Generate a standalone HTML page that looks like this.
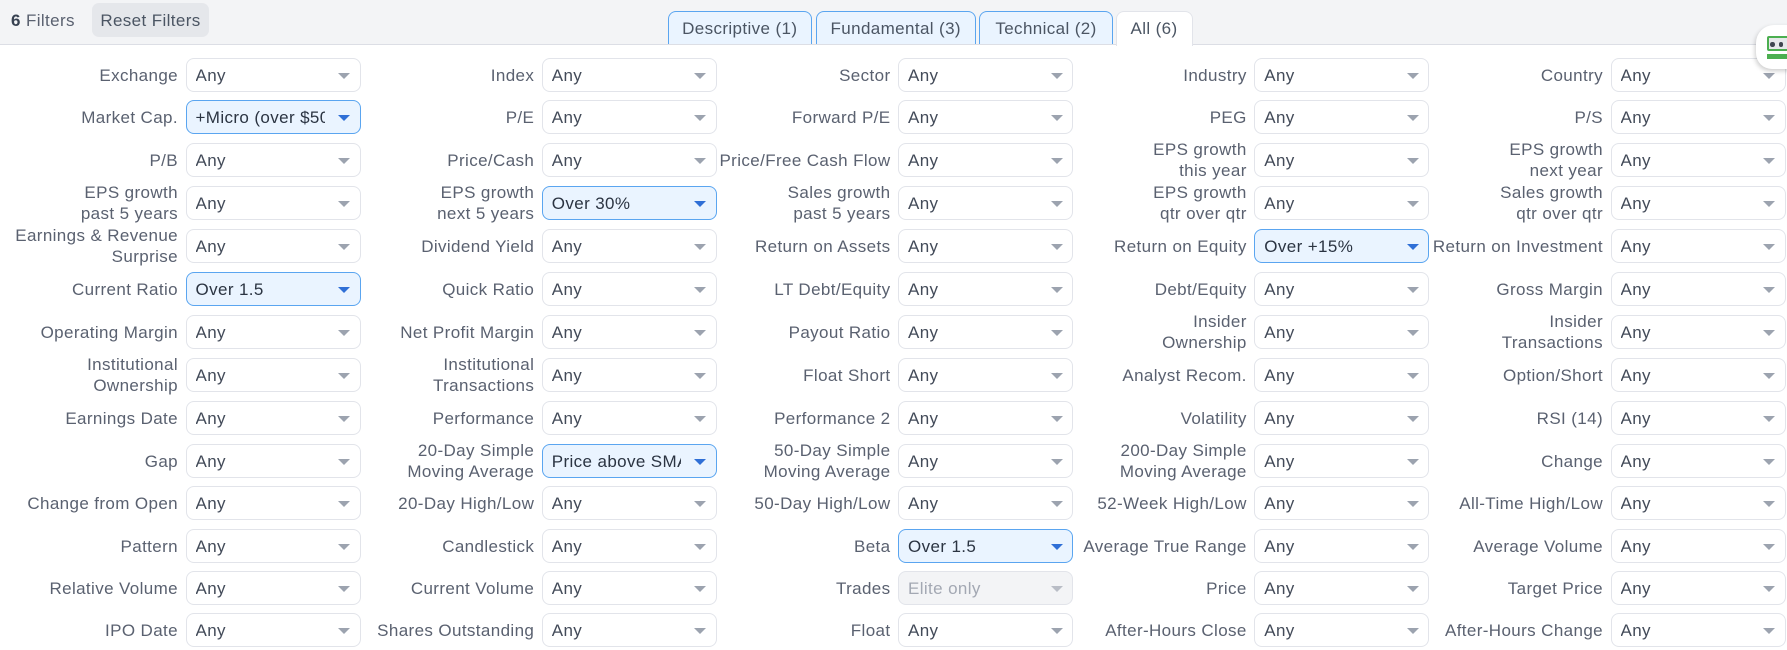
<!DOCTYPE html>
<html lang="en"><head><meta charset="utf-8"><title>Filters</title>
<style>
html,body{margin:0;padding:0;width:1787px;height:650px;overflow:hidden;background:#fff}
body{position:relative;font-family:"Liberation Sans",sans-serif;font-size:17px;letter-spacing:.38px;color:#5a6170}
.top{position:absolute;left:0;top:0;width:1787px;height:44px;background:#f3f4f6;border-bottom:1.5px solid #dcdee5}
.n{position:absolute;left:11px;top:10.5px;line-height:20px;color:#5a6170}
.n b{color:#374151}
.r{position:absolute;left:92px;top:3px;width:117px;height:34px;line-height:35px;border-radius:7px;background:#e5e7eb;text-align:center;color:#4b5563}
.t{position:absolute;top:11px;height:33px;line-height:34px;box-sizing:border-box;border:1.3px solid #5aa5f0;border-bottom:0;border-radius:8px 8px 0 0;background:#eaf4ff;text-align:center;color:#4b5563}
.t.a{background:#fff;border-color:#e2e4ea;height:35px;z-index:2}
.g{position:absolute;left:4.25px;top:58px;display:grid;grid-template-columns:repeat(5,356.25px);grid-template-rows:42px 43px 43px 43px 43px 43px 43px 43px 43px 42px 43px 42px 42px 36px}
.c{display:flex;justify-content:flex-end;align-items:flex-start;height:33.7px}
.l{white-space:nowrap;text-align:right;line-height:20.5px;margin-right:7.5px;align-self:center;position:relative;top:1px;color:#5a6170}
.v{position:relative;flex:none;width:175px;height:33.7px;box-sizing:border-box;border:1.2px solid #e2e4ea;border-radius:8px;background:#fff;color:#434b59}
.v span{position:absolute;left:9px;top:0;width:129.5px;overflow:hidden;white-space:nowrap;line-height:33px}
.v:after{content:"";position:absolute;right:9.3px;top:13.5px;border-left:6px solid transparent;border-right:6px solid transparent;border-top:6.5px solid #9ca3af}
.on{background:#eaf4ff;border-color:#5aa5f0;color:#2b3442}
.on:after{border-top-color:#2f6fd6}
.off{background:#f3f4f6;color:#a3a8b3}
.off:after{border-top-color:#b9bdc6}
.bot{position:absolute;left:1755.5px;top:25px;width:40px;height:44px;background:#fff;border-radius:18px 0 0 16px;box-shadow:-1px 2px 5px rgba(0,0,0,.2);z-index:5}
.bot i{position:absolute;display:block}
</style></head><body>
<div class="top"></div>
<div class="n"><b>6</b> Filters</div>
<div class="r">Reset Filters</div>
<div class="t" style="left:667.5px;width:144.5px">Descriptive (1)</div>
<div class="t" style="left:815.5px;width:160.5px">Fundamental (3)</div>
<div class="t" style="left:979px;width:134px">Technical (2)</div>
<div class="t a" style="left:1115.5px;width:77px">All (6)</div>
<div class="g">
<div class="c"><div class="l">Exchange</div><div class="v"><span>Any</span></div></div>
<div class="c"><div class="l">Index</div><div class="v"><span>Any</span></div></div>
<div class="c"><div class="l">Sector</div><div class="v"><span>Any</span></div></div>
<div class="c"><div class="l">Industry</div><div class="v"><span>Any</span></div></div>
<div class="c"><div class="l">Country</div><div class="v"><span>Any</span></div></div>

<div class="c"><div class="l">Market Cap.</div><div class="v on"><span>+Micro (over $50mln)</span></div></div>
<div class="c"><div class="l">P/E</div><div class="v"><span>Any</span></div></div>
<div class="c"><div class="l">Forward P/E</div><div class="v"><span>Any</span></div></div>
<div class="c"><div class="l">PEG</div><div class="v"><span>Any</span></div></div>
<div class="c"><div class="l">P/S</div><div class="v"><span>Any</span></div></div>

<div class="c"><div class="l">P/B</div><div class="v"><span>Any</span></div></div>
<div class="c"><div class="l">Price/Cash</div><div class="v"><span>Any</span></div></div>
<div class="c"><div class="l">Price/Free Cash Flow</div><div class="v"><span>Any</span></div></div>
<div class="c"><div class="l">EPS growth<br>this year</div><div class="v"><span>Any</span></div></div>
<div class="c"><div class="l">EPS growth<br>next year</div><div class="v"><span>Any</span></div></div>

<div class="c"><div class="l">EPS growth<br>past 5 years</div><div class="v"><span>Any</span></div></div>
<div class="c"><div class="l">EPS growth<br>next 5 years</div><div class="v on"><span>Over 30%</span></div></div>
<div class="c"><div class="l">Sales growth<br>past 5 years</div><div class="v"><span>Any</span></div></div>
<div class="c"><div class="l">EPS growth<br>qtr over qtr</div><div class="v"><span>Any</span></div></div>
<div class="c"><div class="l">Sales growth<br>qtr over qtr</div><div class="v"><span>Any</span></div></div>

<div class="c"><div class="l">Earnings &amp; Revenue<br>Surprise</div><div class="v"><span>Any</span></div></div>
<div class="c"><div class="l">Dividend Yield</div><div class="v"><span>Any</span></div></div>
<div class="c"><div class="l">Return on Assets</div><div class="v"><span>Any</span></div></div>
<div class="c"><div class="l">Return on Equity</div><div class="v on"><span>Over +15%</span></div></div>
<div class="c"><div class="l">Return on Investment</div><div class="v"><span>Any</span></div></div>

<div class="c"><div class="l">Current Ratio</div><div class="v on"><span>Over 1.5</span></div></div>
<div class="c"><div class="l">Quick Ratio</div><div class="v"><span>Any</span></div></div>
<div class="c"><div class="l">LT Debt/Equity</div><div class="v"><span>Any</span></div></div>
<div class="c"><div class="l">Debt/Equity</div><div class="v"><span>Any</span></div></div>
<div class="c"><div class="l">Gross Margin</div><div class="v"><span>Any</span></div></div>

<div class="c"><div class="l">Operating Margin</div><div class="v"><span>Any</span></div></div>
<div class="c"><div class="l">Net Profit Margin</div><div class="v"><span>Any</span></div></div>
<div class="c"><div class="l">Payout Ratio</div><div class="v"><span>Any</span></div></div>
<div class="c"><div class="l">Insider<br>Ownership</div><div class="v"><span>Any</span></div></div>
<div class="c"><div class="l">Insider<br>Transactions</div><div class="v"><span>Any</span></div></div>

<div class="c"><div class="l">Institutional<br>Ownership</div><div class="v"><span>Any</span></div></div>
<div class="c"><div class="l">Institutional<br>Transactions</div><div class="v"><span>Any</span></div></div>
<div class="c"><div class="l">Float Short</div><div class="v"><span>Any</span></div></div>
<div class="c"><div class="l">Analyst Recom.</div><div class="v"><span>Any</span></div></div>
<div class="c"><div class="l">Option/Short</div><div class="v"><span>Any</span></div></div>

<div class="c"><div class="l">Earnings Date</div><div class="v"><span>Any</span></div></div>
<div class="c"><div class="l">Performance</div><div class="v"><span>Any</span></div></div>
<div class="c"><div class="l">Performance 2</div><div class="v"><span>Any</span></div></div>
<div class="c"><div class="l">Volatility</div><div class="v"><span>Any</span></div></div>
<div class="c"><div class="l">RSI (14)</div><div class="v"><span>Any</span></div></div>

<div class="c"><div class="l">Gap</div><div class="v"><span>Any</span></div></div>
<div class="c"><div class="l">20-Day Simple<br>Moving Average</div><div class="v on"><span>Price above SMA20</span></div></div>
<div class="c"><div class="l">50-Day Simple<br>Moving Average</div><div class="v"><span>Any</span></div></div>
<div class="c"><div class="l">200-Day Simple<br>Moving Average</div><div class="v"><span>Any</span></div></div>
<div class="c"><div class="l">Change</div><div class="v"><span>Any</span></div></div>

<div class="c"><div class="l">Change from Open</div><div class="v"><span>Any</span></div></div>
<div class="c"><div class="l">20-Day High/Low</div><div class="v"><span>Any</span></div></div>
<div class="c"><div class="l">50-Day High/Low</div><div class="v"><span>Any</span></div></div>
<div class="c"><div class="l">52-Week High/Low</div><div class="v"><span>Any</span></div></div>
<div class="c"><div class="l">All-Time High/Low</div><div class="v"><span>Any</span></div></div>

<div class="c"><div class="l">Pattern</div><div class="v"><span>Any</span></div></div>
<div class="c"><div class="l">Candlestick</div><div class="v"><span>Any</span></div></div>
<div class="c"><div class="l">Beta</div><div class="v on"><span>Over 1.5</span></div></div>
<div class="c"><div class="l">Average True Range</div><div class="v"><span>Any</span></div></div>
<div class="c"><div class="l">Average Volume</div><div class="v"><span>Any</span></div></div>

<div class="c"><div class="l">Relative Volume</div><div class="v"><span>Any</span></div></div>
<div class="c"><div class="l">Current Volume</div><div class="v"><span>Any</span></div></div>
<div class="c"><div class="l">Trades</div><div class="v off"><span>Elite only</span></div></div>
<div class="c"><div class="l">Price</div><div class="v"><span>Any</span></div></div>
<div class="c"><div class="l">Target Price</div><div class="v"><span>Any</span></div></div>

<div class="c"><div class="l">IPO Date</div><div class="v"><span>Any</span></div></div>
<div class="c"><div class="l">Shares Outstanding</div><div class="v"><span>Any</span></div></div>
<div class="c"><div class="l">Float</div><div class="v"><span>Any</span></div></div>
<div class="c"><div class="l">After-Hours Close</div><div class="v"><span>Any</span></div></div>
<div class="c"><div class="l">After-Hours Change</div><div class="v"><span>Any</span></div></div>
</div>
<div class="bot">
<i style="left:11px;top:11px;width:26px;height:15px;box-sizing:border-box;border:2.5px solid #4caf50;background:#e6e8ea;border-radius:2px"></i>
<i style="left:14.5px;top:17px;width:4.5px;height:4.5px;border-radius:50%;background:#3f4650"></i>
<i style="left:23px;top:17px;width:4.5px;height:4.5px;border-radius:50%;background:#3f4650"></i>
<i style="left:11px;top:28.5px;width:26px;height:5px;background:#4caf50"></i>
</div>
</body></html>
